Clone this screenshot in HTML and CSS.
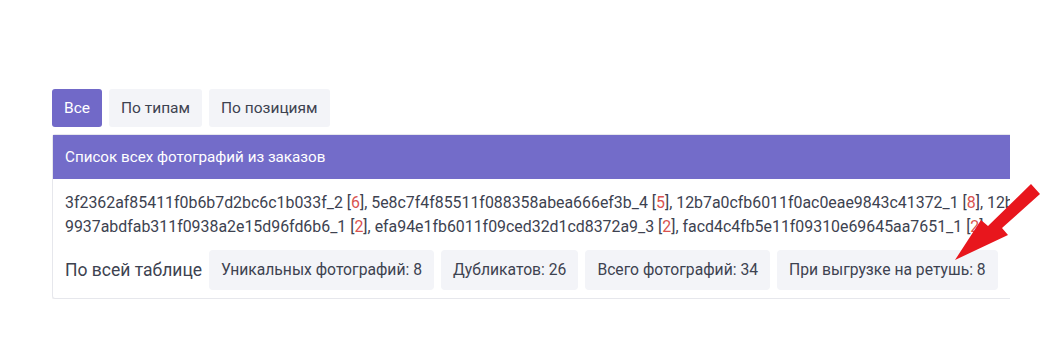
FILE: index.html
```html
<!DOCTYPE html>
<html lang="ru">
  <head>
    <meta charset="UTF-8" />
    <meta name="viewport" content="width=device-width, initial-scale=1.0" />
    <title>Фотографии из заказов</title>
    <link rel="stylesheet" href="styles.css">
  </head>
  <body>
    <div class="page">
      <div class="tabs">
        <button class="tab active">Все</button>
        <button class="tab">По типам</button>
        <button class="tab">По позициям</button>
      </div>

      <div class="card">
        <div class="card-header">Список всех фотографий из заказов</div>
        <div class="card-body">
          <div class="photos">
            3f2362af85411f0b6b7d2bc6c1b033f_2 [<span class="count">6</span>], 5e8c7f4f85511f088358abea666ef3b_4 [<span class="count">5</span>], 12b7a0cfb6011f0ac0eae9843c41372_1 [<span class="count">8</span>], 12b7<br />
            9937abdfab311f0938a2e15d96fd6b6_1 [<span class="count">2</span>], efa94e1fb6011f09ced32d1cd8372a9_3 [<span class="count">2</span>], facd4c4fb5e11f09310e69645aa7651_1 [<span class="count">2</span>]
          </div>
          <div class="stats">
            <span class="stats-label">По всей таблице</span>
            <span class="stat">Уникальных фотографий: 8</span>
            <span class="stat">Дубликатов: 26</span>
            <span class="stat">Всего фотографий: 34</span>
            <span class="stat">При выгрузке на ретушь: 8</span>
          </div>
        </div>
      </div>
    </div>

    <svg class="arrow" width="100" height="90" viewBox="0 0 100 90">
      <polygon points="79,1 88,11 50,45 56,52 3,77 29,37 36,43" fill="#e8161d" />
    </svg>
  </body>
</html>
```

FILE: styles.css
```css
body {
  font-family: Roboto, "Open Sans", sans-serif;
  background-color: #fff;
  color: #3d4250;
  margin: 0;
  padding: 0;
  position: relative;
}

.page {
  width: 958px;
  margin-left: 52px;
  padding-top: 89px;
  overflow: hidden;
}

.tabs {
  display: flex;
  gap: 7px;
  margin-bottom: 7px;
}

.tab {
  font-family: inherit;
  font-size: 15.5px;
  height: 38px;
  padding: 0 12px;
  border: none;
  border-radius: 3px;
  background-color: #f3f4f8;
  color: #3d4250;
  cursor: pointer;
}

.tab.active {
  background-color: #7169c8;
  color: #fff;
}

.card {
  width: 1300px;
  border: 1px solid #e6e7ec;
  border-radius: 3px;
  box-shadow: 0 1px 2px rgba(0, 0, 0, 0.08);
  background-color: #fff;
}

.card-header {
  background-color: #736cc9;
  color: #fff;
  font-size: 15.2px;
  height: 44px;
  line-height: 44px;
  padding: 0 12px;
}

.card-body {
  padding: 12px 12px 8px;
}

.photos {
  font-size: 15.9px;
  line-height: 24px;
  white-space: nowrap;
}

.count {
  color: #d9534f;
}

.stats {
  display: flex;
  align-items: center;
  gap: 7px;
  margin-top: 11px;
}

.stats-label {
  font-size: 17.5px;
}

.stat {
  font-size: 15.7px;
  height: 40px;
  line-height: 40px;
  padding: 0 12px;
  border-radius: 4px;
  background-color: #f3f4f8;
}

.arrow {
  position: absolute;
  left: 952px;
  top: 183px;
}
```
